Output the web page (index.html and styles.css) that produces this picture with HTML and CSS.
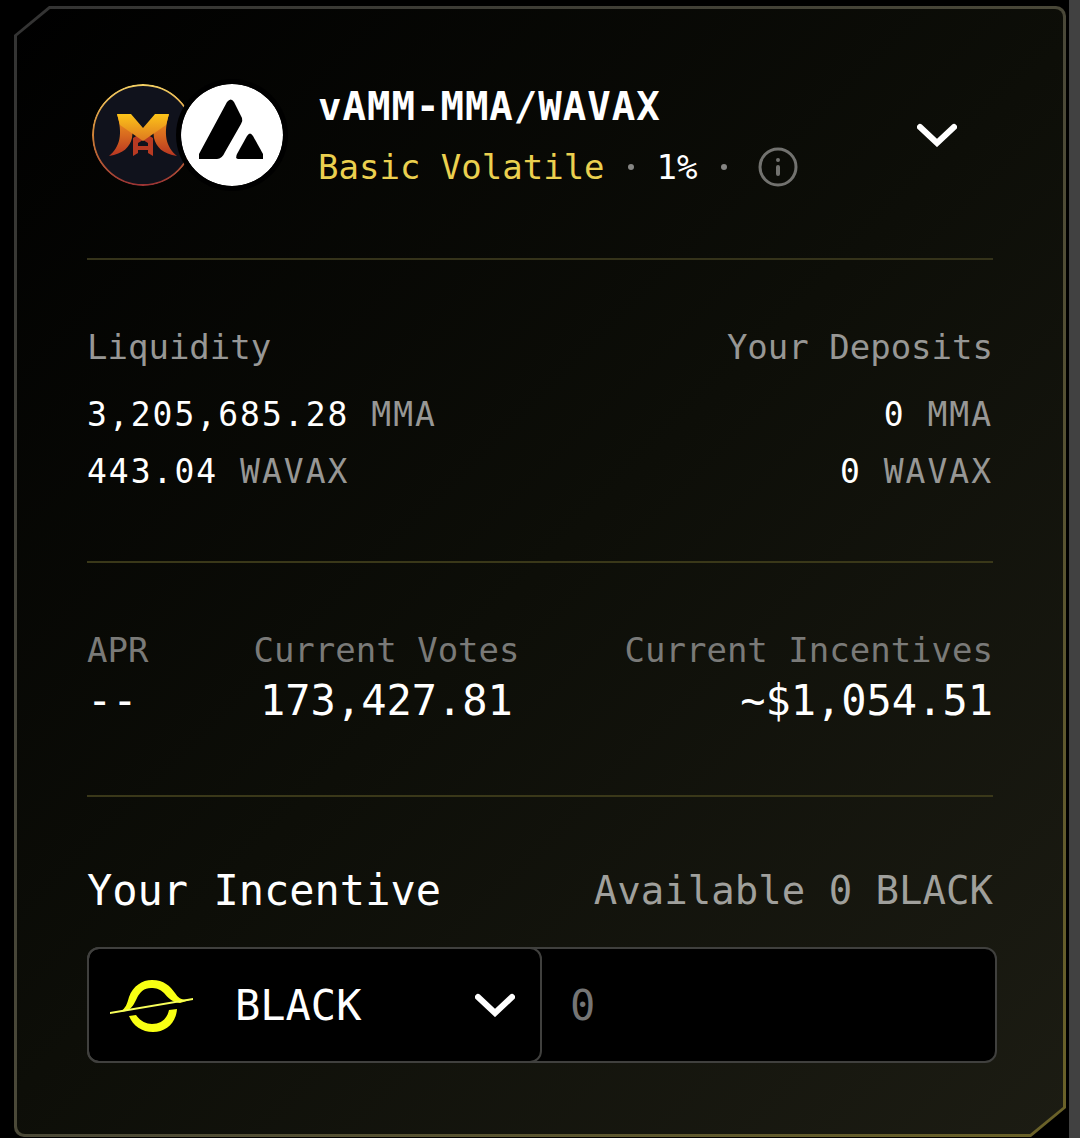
FILE: index.html
```
<!DOCTYPE html>
<html lang="en">
<head>
    <meta charset="utf-8">
    <meta name="viewport" content="width=device-width, initial-scale=1">
    <title>vAMM-MMA/WAVAX</title>
    <link rel="stylesheet" href="styles.css">
</head>
<body>
    <main class="page">
        <article class="card">
            <div class="card-body">
                <header class="pool">
                    <div class="pool-icons">
                        <svg class="token-icon" viewBox="0 0 102 102" aria-hidden="true">
                            <defs>
                                <linearGradient id="ring" x1="0" y1="0" x2="0" y2="1">
                                    <stop offset="0" stop-color="#f3cf63"/>
                                    <stop offset="0.5" stop-color="#cf8136"/>
                                    <stop offset="1" stop-color="#9c3434"/>
                                </linearGradient>
                                <linearGradient id="wing" x1="0" y1="30" x2="0" y2="73" gradientUnits="userSpaceOnUse">
                                    <stop offset="0" stop-color="#ef9a1c"/>
                                    <stop offset="0.5" stop-color="#d8691f"/>
                                    <stop offset="1" stop-color="#b53222"/>
                                </linearGradient>
                                <linearGradient id="vee" x1="0" y1="30" x2="0" y2="58" gradientUnits="userSpaceOnUse">
                                    <stop offset="0" stop-color="#fcc419"/>
                                    <stop offset="1" stop-color="#dd7620"/>
                                </linearGradient>
                            </defs>
                            <circle cx="51" cy="51" r="50" fill="#10121c" stroke="url(#ring)" stroke-width="2"/>
                            <path fill="url(#wing)" d="M25 30 L41 44 L40 54 C38 63 31 70 17 72 C28 63 31 50 25 30 Z"/>
                            <path fill="url(#wing)" d="M77 30 L61 44 L62 54 C64 63 71 70 85 72 C74 63 71 50 77 30 Z"/>
                            <path fill="#b83a22" fill-rule="evenodd" d="M41 54 L51 48 L61 54 V72 L56 69 V66 H46 V69 L41 72 Z M46 62 H56 V59 L51 56 L46 59 Z"/>
                            <path fill="url(#vee)" d="M25 30 H39 L51 44 L63 30 H77 L74 41 L51 57 L28 41 Z"/>
                        </svg>
                        <svg class="token-icon token-icon-front" viewBox="0 0 102 102" aria-hidden="true">
                            <circle cx="51" cy="51" r="51" fill="#fff"/>
                            <path d="M46 18 Q50 13 53 18 L61 34 Q62 37 60 40 L44 68 Q41 75 36 75 H18 V70 Z"/>
                            <path d="M66 52 Q69 47 72 52 L82 70 V75 H57 Q54 75 56 70 Z"/>
                        </svg>
                    </div>
                    <div class="pool-info">
                        <h1 class="pool-name">vAMM-MMA/WAVAX</h1>
                        <div class="pool-meta">
                            <span class="pool-type">Basic Volatile</span>
                            <span class="dot"></span>
                            <span>1%</span>
                            <span class="dot"></span>
                            <button class="info-btn" type="button" aria-label="Pool info">
                                <svg viewBox="0 0 40 40" width="40" height="40" fill="none" stroke="#72726f">
                                    <circle cx="20" cy="20" r="18" stroke-width="3"/>
                                    <path d="M20 20 V27" stroke-width="4" stroke-linecap="round"/>
                                    <circle cx="20" cy="13" r="2" fill="#72726f" stroke="none"/>
                                </svg>
                            </button>
                        </div>
                    </div>
                    <button class="toggle-btn" type="button" aria-label="Toggle details">
                        <svg class="chevron" viewBox="0 0 40 24"><path d="M3 4 L20 20 L37 4"/></svg>
                    </button>
                </header>

                <section class="row liquidity">
                    <div class="col">
                        <h2 class="label">Liquidity</h2>
                        <p class="amount">3,205,685.28 <span class="unit">MMA</span></p>
                        <p class="amount">443.04 <span class="unit">WAVAX</span></p>
                    </div>
                    <div class="col col-right">
                        <h2 class="label">Your Deposits</h2>
                        <p class="amount">0 <span class="unit">MMA</span></p>
                        <p class="amount">0 <span class="unit">WAVAX</span></p>
                    </div>
                </section>

                <section class="row stats">
                    <div class="col">
                        <h2 class="label">APR</h2>
                        <p class="value">--</p>
                    </div>
                    <div class="col col-center">
                        <h2 class="label">Current Votes</h2>
                        <p class="value">173,427.81</p>
                    </div>
                    <div class="col col-right">
                        <h2 class="label">Current Incentives</h2>
                        <p class="value">~$1,054.51</p>
                    </div>
                </section>

                <section class="incentive">
                    <div class="incentive-head">
                        <label class="incentive-title" for="amount">Your Incentive</label>
                        <span class="available">Available 0 BLACK</span>
                    </div>
                    <div class="field">
                        <div class="token-select">
                            <select aria-label="Incentive token">
                                <option>BLACK</option>
                            </select>
                            <svg class="black-logo" viewBox="0 -2 84 56" aria-hidden="true">
                                <path fill="#f8ff13" d="M10 33 C16 29 17 25 19 18 C23 7 32 1 42 1 C54 1 60 7 65 14 C69 20 72 22 83 20 L70 24 C62 23 58 19 54 14 C50 10 46 9 41 9 C34 9 30 13 27 19 C24 25 22 30 16 32 Z"/>
                                <path fill="#f8ff5a" d="M0 33 L83 19 V21 L0 35 Z"/>
                                <path fill="#f8ff13" d="M19 37 L26 36 C30 42 36 45 42 45 C51 45 57 40 59 31 L67 30 C66 44 56 53 43 53 C32 53 23 47 19 37 Z"/>
                            </svg>
                            <svg class="chevron" viewBox="0 0 40 24" aria-hidden="true"><path d="M3 4 L20 20 L37 4"/></svg>
                        </div>
                        <input class="amount-input" id="amount" type="text" inputmode="decimal" placeholder="0">
                    </div>
                </section>
            </div>
        </article>
    </main>
    <div class="scroll-track"></div>
</body>
</html>
```
FILE: styles.css
```
* {
    box-sizing: border-box;
}

body {
    display: flex;
    min-height: 100vh;
    margin: 0;
    background: #000;
    color: #fff;
    font-family: "DejaVu Sans Mono", monospace;
    font-size: 34px;
    line-height: 48px;
}

h1, h2, p {
    margin: 0;
    font-size: inherit;
    font-weight: normal;
}

button {
    display: flex;
    align-items: center;
    padding: 0;
    border: none;
    background: none;
    cursor: pointer;
}

.page {
    flex: 1;
    min-width: 0;
    padding: 6px 3px 1px 14px;
}

.scroll-track {
    width: 11px;
    background: #414141;
}

/* gradient frame with two cut corners */
.card {
    padding: 3px;
    border-radius: 10px;
    background: linear-gradient(135deg, #333 0%, #4a4838 50%, #6b6228 100%);
    clip-path: polygon(35px 0, 100% 0, 100% calc(100% - 29px), calc(100% - 35px) 100%, 0 100%, 0 29px);
}

.card-body {
    padding: 0 70px;
    border-radius: 8px;
    background: linear-gradient(135deg, #000 0%, #0d0e08 50%, #1c1c13 100%);
    clip-path: polygon(33px 0, 100% 0, 100% calc(100% - 27px), calc(100% - 33px) 100%, 0 100%, 0 27px);
}

/* header */
.pool {
    display: flex;
    align-items: flex-start;
    gap: 30px;
    padding: 74px 0 67px;
    border-bottom: 2px solid #35331a;
}

.pool-icons {
    display: flex;
    padding: 1px 5px;
}

.token-icon {
    width: 102px;
    height: 102px;
    border-radius: 50%;
}

.token-icon-front {
    margin-left: -13px;
    box-shadow: 0 0 0 5px #000;
}

.pool-info {
    display: flex;
    flex-direction: column;
    gap: 12px;
}

.pool-name {
    font-size: 39px;
    font-weight: bold;
    letter-spacing: 1px;
}

.pool-meta {
    display: flex;
    align-items: center;
    gap: 23px;
}

.pool-type {
    color: #ebd04f;
}

.dot {
    width: 6px;
    height: 6px;
    border-radius: 50%;
    background: #858583;
}

.info-btn {
    margin-left: 8px;
}

.toggle-btn {
    height: 104px;
    margin-left: auto;
    margin-right: 36px;
}

.chevron {
    width: 40px;
    height: 24px;
    fill: none;
    stroke: #fff;
    stroke-width: 6;
    stroke-linecap: round;
}

/* data rows */
.row {
    display: flex;
    justify-content: space-between;
    border-bottom: 2px solid #3a3819;
}

.col-center {
    text-align: center;
}

.col-right {
    text-align: right;
}

.liquidity {
    padding: 63px 0 61px;
}

.liquidity .label {
    margin-bottom: 15px;
    color: #979795;
}

.amount {
    font-size: 33px;
    line-height: 57px;
    letter-spacing: 2px;
}

.unit {
    color: #979795;
}

.stats {
    padding: 63px 0 67px;
}

.stats .label {
    color: #7a7a78;
}

.value {
    font-size: 42px;
    line-height: 54px;
}

/* incentive form */
.incentive {
    padding: 66px 0 71px;
}

.incentive-head {
    display: flex;
    justify-content: space-between;
    margin-bottom: 28px;
    line-height: 56px;
}

.incentive-title {
    font-size: 42px;
}

.available {
    font-size: 39px;
    color: #a0a09c;
}

.field {
    display: grid;
    grid-template-columns: 1fr 1fr;
    height: 116px;
    margin-right: -4px;
    border: 2px solid #40403e;
    border-radius: 12px;
    background: #000;
}

.token-select {
    display: grid;
    align-items: center;
    margin: -2px 0 -2px -2px;
    border: 2px solid #40403e;
    border-radius: 12px;
}

.token-select > * {
    grid-area: 1 / 1;
}

.token-select select {
    width: 100%;
    height: 100%;
    padding: 0 80px 0 146px;
    border: none;
    border-radius: 12px;
    background: transparent;
    color: #fff;
    font-family: inherit;
    font-size: 42px;
    appearance: none;
}

.black-logo {
    width: 84px;
    height: 56px;
    margin-left: 21px;
    pointer-events: none;
}

.token-select .chevron {
    justify-self: end;
    margin-right: 25px;
    pointer-events: none;
}

.amount-input {
    width: 100%;
    padding: 0 28px;
    border: none;
    border-radius: 12px;
    background: transparent;
    color: #fff;
    font-family: inherit;
    font-size: 42px;
}

.amount-input::placeholder {
    color: #757575;
}
```
